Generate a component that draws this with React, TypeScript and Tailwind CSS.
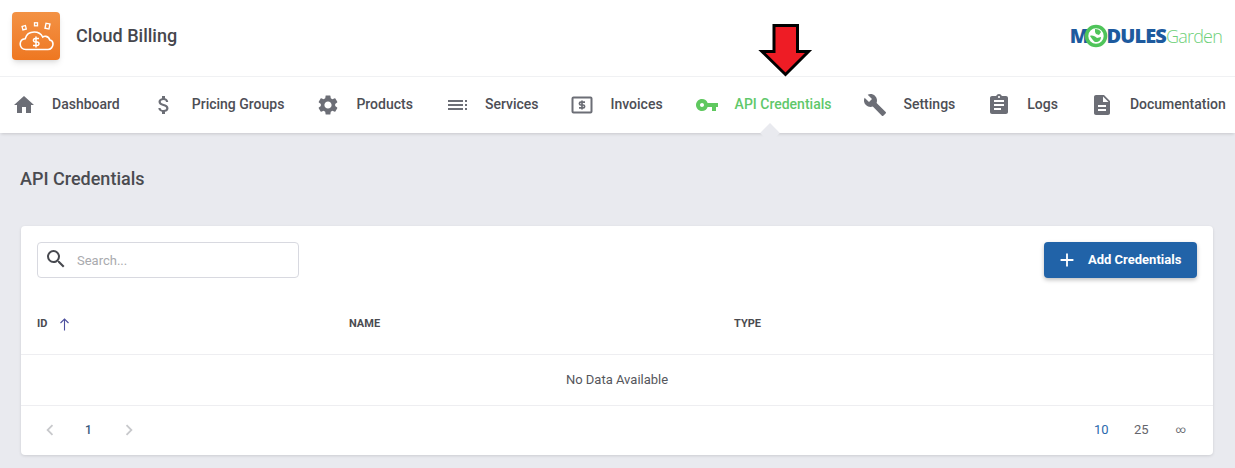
import React from 'react';
import {
  MdHome,
  MdAttachMoney,
  MdSettings,
  MdVpnKey,
  MdBuild,
  MdAssignment,
  MdDescription,
  MdSearch,
  MdAdd,
  MdChevronLeft,
  MdChevronRight,
} from 'react-icons/md';

const ServicesIcon = ({ className }: { className?: string }) => (
  <svg viewBox="0 0 24 24" className={className} fill="currentColor">
    <path d="M3 7h15v2H3zM3 11h15v2H3zM3 15h15v2H3zM20 7h2v2h-2zM20 11h2v2h-2zM20 15h2v2h-2z" />
  </svg>
);

const InvoiceIcon = ({ className }: { className?: string }) => (
  <svg viewBox="0 0 24 24" className={className} fill="none" stroke="currentColor">
    <rect x="2.500" y="4.500" width="19" height="15" rx="1" strokeWidth="2" />
    <path
      d="M15 9.200h-4.200a1 1 0 0 0 0 2.800h2.400a1 1 0 0 1 0 2.800H9M12 7.500v9"
      strokeWidth="1.700"
    />
  </svg>
);

const CloudLogo = () => (
  <div className="w-12 h-12 rounded bg-gradient-to-b from-[#f39244] to-[#ee7720] shadow-md flex items-center justify-center">
    <svg viewBox="0 0 48 48" className="w-12 h-12" fill="none" stroke="#fff">
      <path
        d="M14 37.500c-4 0-5.800-3-5.800-5.500 0-3 2.200-5 5-5.300 1-4 4.500-6.700 9-6.700 4 0 7 2 8.500 5 1-.7 2-.8 3.300-.6 2 .4 3.400 1.800 3.800 3.600 2 .3 3.200 2 3.200 4 0 3-2.200 5.500-5 5.500z"
        strokeWidth="1.600"
      />
      <rect x="10.500" y="14" width="3.500" height="3.500" transform="rotate(-15 12 16)" strokeWidth="1.300" />
      <rect x="22.500" y="10.800" width="3" height="3" strokeWidth="1.300" />
      <rect x="33.500" y="11.500" width="4" height="5" transform="rotate(12 35 14)" strokeWidth="1.400" />
      <path
        d="M27 26.500h-3.800a1.600 1.600 0 0 0 0 3.500h2a1.600 1.600 0 0 1 0 3.500H21M24 24.500v11"
        strokeWidth="1.500"
      />
    </svg>
  </div>
);

const ModulesGardenLogo = () => (
  <div className="flex items-center font-['Open_Sans',sans-serif] leading-none select-none">
    <span className="text-[20px] font-extrabold text-[#1d5a9e] tracking-[-0.5px]">M</span>
    <svg viewBox="0 0 24 24" className="w-[24px] h-[24px] -ml-[5px] -mr-[1px] relative">
      <circle cx="12" cy="12" r="9.500" fill="#fff" stroke="#4fc45a" strokeWidth="3.600" />
      <path
        d="M11 5c3 0 5 1 6 3l-2 3-3-1-1-2zM6 12c2-1 5 0 7 2l4-1c0 3-2 5-5 5-2 0-3-2-6-6z"
        fill="#4fc45a"
      />
    </svg>
    <span className="text-[20px] font-extrabold text-[#1d5a9e] tracking-[-0.9px]">DULES</span>
    <span className="text-[18px] font-light text-[#6fd07a] tracking-[-0.8px]">Garden</span>
  </div>
);

const navItems = [
  { label: 'Dashboard', Icon: MdHome },
  { label: 'Pricing Groups', Icon: MdAttachMoney },
  { label: 'Products', Icon: MdSettings },
  { label: 'Services', Icon: ServicesIcon },
  { label: 'Invoices', Icon: InvoiceIcon },
  { label: 'API Credentials', Icon: MdVpnKey, active: true },
  { label: 'Settings', Icon: MdBuild },
  { label: 'Logs', Icon: MdAssignment },
  { label: 'Documentation', Icon: MdDescription },
];

const App = () => {
  return (
    <div className="h-[468px] overflow-hidden bg-[#e9eaef] font-['Roboto',sans-serif] text-[#4a4b50] relative">
      {/* Header */}
      <div className="h-[77px] bg-white flex items-center justify-between pl-3 pr-[13px] pb-1 border-b border-[#f0f1f3]">
        <div className="flex items-center gap-4">
          <CloudLogo />
          <span className="text-lg font-medium text-[#46474d]">Cloud Billing</span>
        </div>
        <ModulesGardenLogo />
      </div>

      {/* Nav */}
      <nav className="h-[56px] bg-white flex items-center gap-x-8 pl-3 shadow-[0_2px_3px_-1px_rgba(0,0,0,0.15)] relative whitespace-nowrap">
        {navItems.map(({ label, Icon, active }) => (
          <div key={label} className="flex items-center gap-4 relative h-full">
            <Icon className={`w-6 h-6 ${active ? 'text-[#5fc85f]' : 'text-[#6c6e76]'}`} />
            <span className={`text-sm font-medium -mt-0.5 ${active ? 'text-[#5fc86a]' : 'text-[#4d4e55]'}`}>
              {label}
            </span>
            {active && (
              <span className="absolute bottom-[-7px] left-[68px] w-[14px] h-[14px] rotate-45 bg-[#e9eaef]" />
            )}
          </div>
        ))}
      </nav>

      {/* Page */}
      <div className="pl-5 pr-[22px] pt-[35px]">
        <h1 className="text-lg font-medium leading-[21px] text-[#4a4b50]">API Credentials</h1>

        <div className="mt-[37px] ml-px bg-white rounded shadow-[0_1px_3px_rgba(0,0,0,0.12)]">
          <div className="flex items-center justify-between px-4 pt-4">
            <div className="w-[262px] h-9 border border-[#d8d9e0] rounded flex items-center px-[6px] gap-[9px]">
              <MdSearch className="w-6 h-6 -mt-0.5 text-[#47494f]" />
              <span className="text-[13px] mt-0.5 text-[#a9aaae]">Search...</span>
            </div>
            <button className="w-[153px] h-9 bg-[#2163a8] text-white rounded shadow-[0_2px_4px_rgba(0,0,0,0.25)] flex items-center pl-[12px] gap-[10px] text-[13px] font-bold">
              <MdAdd className="w-[22px] h-[22px]" />
              Add Credentials
            </button>
          </div>

          <div className="grid grid-cols-[312px_385px_1fr] items-center h-[77px] pt-4 px-4 border-b border-[#eeeef1] text-[11px] font-bold text-[#4a4b50]">
            <div className="flex items-center gap-[12px]">
              ID
              <svg viewBox="0 0 11 13" className="w-[11px] h-[13px] text-[#4c4f9e]" fill="none" stroke="currentColor">
                <path d="M5.500 12.500V1M1.500 5l4-4 4 4" strokeWidth="1.100" />
              </svg>
            </div>
            <div>NAME</div>
            <div>TYPE</div>
          </div>

          <div className="h-[51px] flex items-center justify-center border-b border-[#eeeef1] text-[13px] text-[#55565c]">
            No Data Available
          </div>

          <div className="h-[49px] pb-0.5 flex items-center justify-between pl-[18px] pr-[25px]">
            <div className="flex items-center text-xs font-medium">
              <MdChevronLeft className="w-[22px] h-[22px] text-[#c8c9cc]" />
              <span className="w-[57px] pr-0.5 text-center text-[#3a5a7c]">1</span>
              <MdChevronRight className="w-[22px] h-[22px] text-[#c8c9cc]" />
            </div>
            <div className="flex items-center gap-[26px] text-[13px]">
              <span className="w-[14px] text-center text-[#2a69ad]">10</span>
              <span className="w-[14px] text-center text-[#64656b]">25</span>
              <span className="w-[14px] text-center text-[10px] text-[#64656b]">∞</span>
            </div>
          </div>
        </div>
      </div>

      {/* Annotation arrow */}
      <svg viewBox="0 0 1235 468" className="absolute top-0 left-0 w-[1235px] h-[468px] pointer-events-none">
        <path
          d="M774 25.500h23.500v26h11L785.500 74.500 762 51.500h12z"
          fill="#ee1c25"
          stroke="#000"
          strokeWidth="3"
        />
      </svg>
    </div>
  );
};

export default App;
